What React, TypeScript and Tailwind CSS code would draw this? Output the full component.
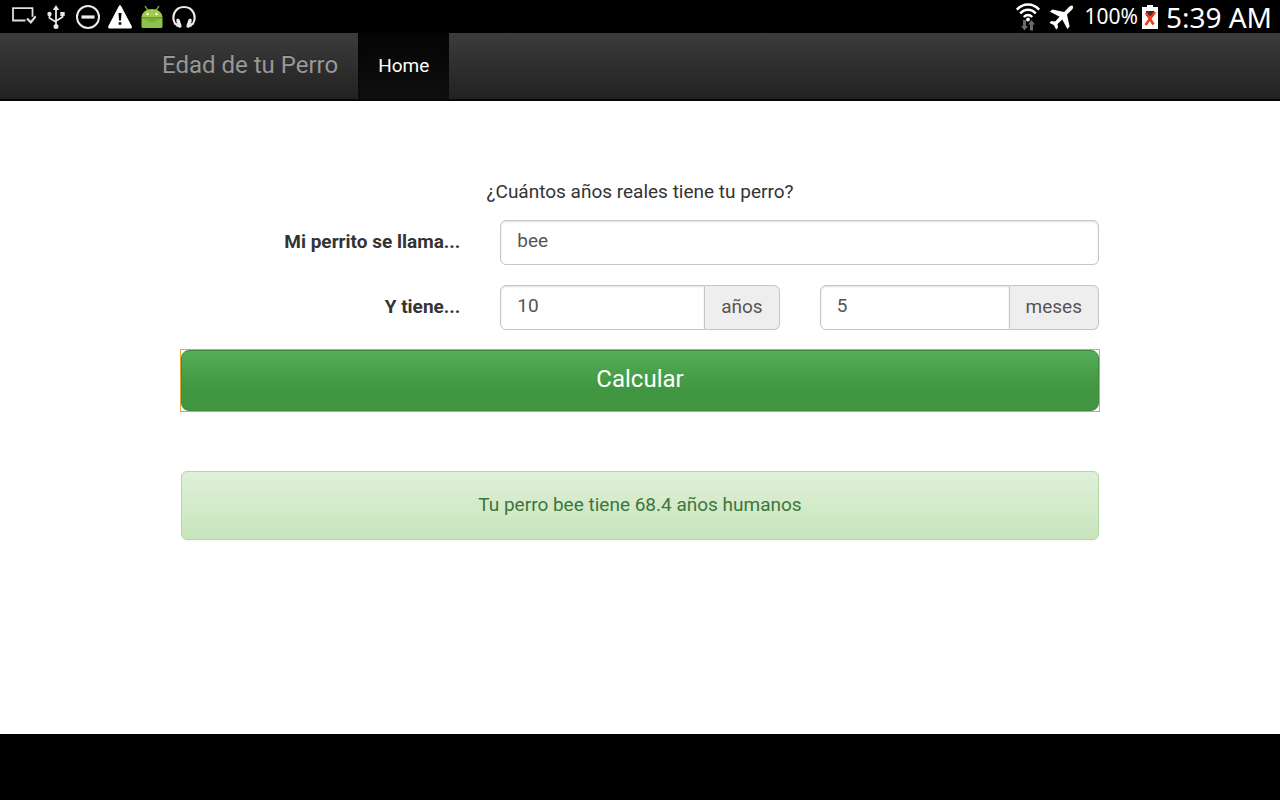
import { useState } from 'react';
import type { FormEvent } from 'react';

function NotificationIcons() {
  return (
    <div className="flex items-center gap-2">
      <svg className="h-6 w-6" viewBox="0 0 24 24" fill="none" stroke="#dedede" strokeWidth="1.8">
        <path d="M13.500 15.500H1V3.200h19.500v8.500" />
        <path d="M15 13.500l3.800 3.800 5-6" strokeWidth="2.200" />
      </svg>
      <svg className="h-6 w-6" viewBox="0 0 24 24" fill="none" stroke="#e6e6e6" strokeWidth="1.8">
        <path d="M12 3v17M5.500 9.500v3.500l6.500 4M18.500 9.500v2.500L12 16" />
        <path d="M12 0l3.200 5H8.800z" fill="#e6e6e6" stroke="none" />
        <circle cx="12" cy="21.500" r="2.500" fill="#e6e6e6" stroke="none" />
        <circle cx="5.500" cy="9" r="2.200" fill="#e6e6e6" stroke="none" />
        <rect x="16.300" y="7" width="4.400" height="4" fill="#e6e6e6" stroke="none" />
      </svg>
      <svg className="h-6 w-6" viewBox="0 0 24 24" fill="none" stroke="#ececec">
        <circle cx="12" cy="12" r="11" strokeWidth="2" />
        <path d="M5.500 12h13" strokeWidth="3.200" />
      </svg>
      <svg className="h-6 w-6" viewBox="0 0 24 24">
        <path d="M12 1.800L22.500 22h-21z" fill="#fff" stroke="#fff" strokeWidth="2.800" strokeLinejoin="round" />
        <path d="M10.500 8h3l-.5 7.500h-2zM10.700 17.200h2.600v2.600h-2.600z" fill="#000" />
      </svg>
      <svg className="h-6 w-6" viewBox="0 0 24 24">
        <path d="M5 1l3 4.500M19 1l-3 4.500" stroke="#8db63c" strokeWidth="1.300" />
        <path d="M1.500 12.500C2 7 6 4 12 4s10 3 10.500 8.500z" fill="#9ccb4a" />
        <path d="M1.500 12.500h21v9q0 1.500-1.500 1.500H3q-1.500 0-1.500-1.500z" fill="#8bc34a" />
        <path d="M1.500 13h21L12 17.500z" fill="#7cab3b" />
        <circle cx="7.500" cy="9" r="1.200" fill="#fff" />
        <circle cx="16.500" cy="9" r="1.200" fill="#fff" />
      </svg>
      <svg className="h-6 w-6" viewBox="0 0 24 24" fill="none" stroke="#ececec">
        <path d="M3.500 19.500C-1.500 11.500 3 2 12 2s13.500 9.500 8.500 17.500" strokeWidth="2.200" />
        <path d="M6 15.500l1.800 5.500M18 15.500L16.200 21" strokeWidth="3.600" strokeLinecap="round" />
        <path d="M3.500 18.500l2.500 3M20.500 18.500l-2.500 3" strokeWidth="2" />
      </svg>
    </div>
  );
}

function SystemIcons() {
  return (
    <div className="flex items-center">
      <svg className="mr-2 h-7 w-6" viewBox="0 0 24 28" fill="none" stroke="#fff" strokeWidth="2.500">
        <path d="M.8 6.700C7-.3 17-.3 23.200 6.700M4.200 10.500c4.500-5 11.100-5 15.600 0M7.800 14c2.500-2.600 5.900-2.600 8.400 0" />
        <circle cx="12" cy="16.500" r="1.900" fill="#fff" stroke="none" />
        <path d="M7 17h3v6h2l-3.500 4.500L5 23h2zM14 27.500h3v-6h2L15.500 17 12 21.500h2z" fill="#6a6a6a" stroke="none" />
      </svg>
      <svg className="mr-2 h-7 w-7" viewBox="0 0 28 28" fill="#fff">
        <path d="M24.500 2.700c1.200 1.200.6 2.800-.8 4.300L19 11.600l2.600 12-2.300 2.300-5-9.500-4.800 4.600.5 3.700-1.900 1.800-2.300-4.400L1.500 20l1.800-1.900 3.800.5 4.500-4.800L2 8.700l2.200-2.200L16.200 9l4.700-4.900c1.200-1.300 2.700-2.200 3.600-1.400z" />
      </svg>
      <span className="text-[21px]">100%</span>
      <svg className="mx-1 h-6 w-4" viewBox="0 0 16 24">
        <path d="M5 0h6v2h5v22H0V2h5z" fill="#fff" />
        <path d="M4 6h8v5H4z" fill="#333" />
        <path d="M4 7.500l7.500 12M13 7l-9.500 13" stroke="#ee3a12" strokeWidth="2.500" />
      </svg>
      <time className="ml-1 text-[28px]">5:39 AM</time>
    </div>
  );
}

function StatusBar() {
  return (
    <div className="flex h-[33px] items-center justify-between bg-black pr-2 pl-3 font-['Noto_Sans',sans-serif] leading-none text-white">
      <NotificationIcons />
      <SystemIcons />
    </div>
  );
}

function Navbar() {
  return (
    <nav className="border-b-2 border-[#080808] bg-linear-to-b from-[#3c3c3c] to-[#222222]">
      <div className="mx-auto flex h-[66px] max-w-[996px] items-stretch">
        <a
          href="#"
          className="flex items-center px-5 pb-0.5 text-2xl text-[#999999] [text-shadow:0_-1px_0_rgba(0,0,0,0.25)]">
          Edad de tu Perro
        </a>
        <a
          href="#"
          className="flex items-center bg-linear-to-b from-[#050505] to-[#101010] px-5 pb-px text-white shadow-[inset_0_4px_12px_rgba(0,0,0,0.25)]">
          Home
        </a>
      </div>
    </nav>
  );
}

const fieldClass =
  'h-[45px] w-full min-w-0 border border-[#c6c6c6] bg-white px-4 pb-1 text-[#555555] shadow-[inset_0_1px_2px_rgba(0,0,0,0.12)] outline-none';
const addonClass =
  'flex items-center rounded-r-md border border-l-0 border-[#c6c6c6] bg-[#eeeeee] px-4 pb-0.5 text-[#555555]';

export default function App() {
  const [name, setName] = useState('bee');
  const [years, setYears] = useState('10');
  const [months, setMonths] = useState('5');
  const [result, setResult] = useState('Tu perro bee tiene 68.4 años humanos');

  const handleSubmit = (e: FormEvent) => {
    e.preventDefault();
    const age = Number(years) + Number(months) / 12;
    const human = age <= 2 ? age * 12 : 24 + (age - 2) * 5.28;
    setResult(`Tu perro ${name} tiene ${human.toFixed(1)} años humanos`);
  };

  return (
    <div className="flex min-h-screen flex-col bg-white font-[Roboto,sans-serif] text-[19px] leading-7 text-[#333333]">
      <StatusBar />
      <Navbar />

      <main className="mx-auto w-full max-w-[918px] flex-1 pt-[77px]">
        <form onSubmit={handleSubmit}>
          <p className="mb-3.5 text-center">¿Cuántos años reales tiene tu perro?</p>

          {/* Nombre */}
          <div className="mb-5 grid grid-cols-3 items-center gap-x-10">
            <label htmlFor="name" className="pb-0.5 text-right font-bold">
              Mi perrito se llama...
            </label>
            <div className="col-span-2 flex">
              <input
                id="name"
                type="text"
                value={name}
                onChange={(e) => setName(e.target.value)}
                className={`${fieldClass} rounded-md`}
              />
            </div>
          </div>

          {/* Edad */}
          <div className="mb-5 grid grid-cols-3 items-center gap-x-10">
            <label htmlFor="years" className="pb-0.5 text-right font-bold">
              Y tiene...
            </label>
            <div className="flex">
              <input
                id="years"
                type="text"
                value={years}
                onChange={(e) => setYears(e.target.value)}
                className={`${fieldClass} rounded-l-md`}
              />
              <label htmlFor="years" className={addonClass}>
                años
              </label>
            </div>
            <div className="flex">
              <input
                id="months"
                type="text"
                value={months}
                onChange={(e) => setMonths(e.target.value)}
                className={`${fieldClass} rounded-l-md`}
              />
              <label htmlFor="months" className={addonClass}>
                meses
              </label>
            </div>
          </div>

          <div className="outline outline-[#e8a33a]">
            <button
              type="submit"
              className="block h-[61px] w-full rounded-lg border border-[#3d8b3d] bg-linear-to-b from-[#54ae56] to-[#419641] to-65% pb-1 text-2xl text-white">
              Calcular
            </button>
          </div>
        </form>

        <div
          role="status"
          className="mt-[60px] rounded-md border border-[#b2dba1] bg-linear-to-b from-[#dff0d8] to-[#c8e5bc] px-5 pt-[19px] pb-5 text-center text-[#3c763d] shadow-[0_1px_2px_rgba(0,0,0,0.05)]">
          {result}
        </div>
      </main>

      <footer className="h-[66px] bg-black" />
    </div>
  );
}
